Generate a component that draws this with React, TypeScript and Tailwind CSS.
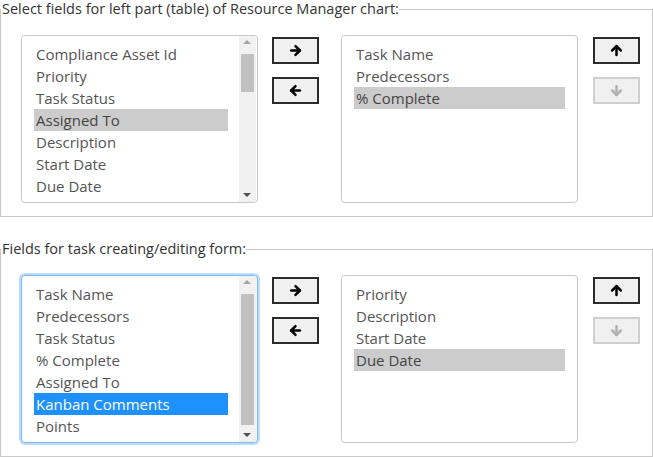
import { ArrowRight, ArrowLeft, ArrowUp, ArrowDown } from "lucide-react";

type ListProps = { items: string[]; selected?: string; active?: boolean; scroll?: { top: number; height: number }; focused?: boolean };

function ListBox({ items, selected, active, scroll, focused }: ListProps) {
  return (
    <div
      className={`relative w-[237px] h-[168px] rounded-[4px] bg-white overflow-hidden border ${
        focused ? "border-[#7fb8f0] shadow-[0_0_0_2px_#b9dcff]" : "border-[#c8c8c8]"
      }`}
    >
      <div className={`pt-[7px] pl-[12px] ${scroll ? "pr-[29px]" : "pr-[12px]"}`}>
        {items.map((it) => (
          <div
            key={it}
            className={`h-[22px] leading-[22px] pl-[2px] whitespace-nowrap ${
              it === selected ? (active ? "bg-[#1e90ff] text-white" : "bg-[#cccccc] text-[#444]") : "text-[#555]"
            }`}
          >
            {it}
          </div>
        ))}
      </div>
      {scroll && (
        <div className="absolute right-[1px] top-0 bottom-0 w-[17px] bg-[#f1f1f1]">
          <div className="absolute left-[4px] top-[4px] w-0 h-0 border-l-[4px] border-r-[4px] border-b-[4px] border-l-transparent border-r-transparent border-b-[#a3a3a3]" />
          <div className="absolute left-[2px] w-[13px] bg-[#c1c1c1]" style={{ top: scroll.top, height: scroll.height }} />
          <div className="absolute left-[4px] bottom-[5px] w-0 h-0 border-l-[4px] border-r-[4px] border-t-[4px] border-l-transparent border-r-transparent border-t-[#505050]" />
        </div>
      )}
    </div>
  );
}

function Btn({ children, disabled }: { children: React.ReactNode; disabled?: boolean }) {
  return (
    <div
      className={`w-[47px] h-[27px] flex items-center justify-center bg-[#f0f0f0] border-2 ${
        disabled ? "border-[#cfcfcf] text-[#b0b0b0]" : "border-[#2b2b2b] text-black"
      }`}
    >
      {children}
    </div>
  );
}

function Section({ title, left, right }: { title: string; left: ListProps; right: ListProps }) {
  return (
    <fieldset className="border border-[#c9c9c9] pl-[20px] pr-[12px] pt-[17px] pb-[13px] mx-0">
      <legend className="text-[#333] text-[14.5px] leading-[18px] -ml-[20px] pl-[1px]">{title}</legend>
      <div className="flex items-start">
        <ListBox {...left} />
        <div className="flex flex-col gap-[13px] ml-[14px] mt-[2px]">
          <Btn><ArrowRight size={15} strokeWidth={4} /></Btn>
          <Btn><ArrowLeft size={15} strokeWidth={4} /></Btn>
        </div>
        <div className="ml-[22px]"><ListBox {...right} /></div>
        <div className="flex flex-col gap-[13px] ml-[15px] mt-[2px]">
          <Btn><ArrowUp size={15} strokeWidth={4} /></Btn>
          <Btn disabled><ArrowDown size={15} strokeWidth={4} /></Btn>
        </div>
      </div>
    </fieldset>
  );
}

export default function App() {
  return (
    <div className="w-[653px] h-[458px] bg-white text-[15px]" style={{ fontFamily: '"Open Sans", "Noto Sans", sans-serif' }}>
      <Section
        title="Select fields for left part (table) of Resource Manager chart:"
        left={{ items: ["Compliance Asset Id", "Priority", "Task Status", "Assigned To", "Description", "Start Date", "Due Date", "Kanban Comments"], selected: "Assigned To", scroll: { top: 18, height: 38 } }}
        right={{ items: ["Task Name", "Predecessors", "% Complete"], selected: "% Complete" }}
      />
      <div className="h-[23px]" />
      <Section
        title="Fields for task creating/editing form:"
        left={{ items: ["Task Name", "Predecessors", "Task Status", "% Complete", "Assigned To", "Kanban Comments", "Points", "Labels"], selected: "Kanban Comments", active: true, focused: true, scroll: { top: 18, height: 131 } }}
        right={{ items: ["Priority", "Description", "Start Date", "Due Date"], selected: "Due Date" }}
      />
    </div>
  );
}
